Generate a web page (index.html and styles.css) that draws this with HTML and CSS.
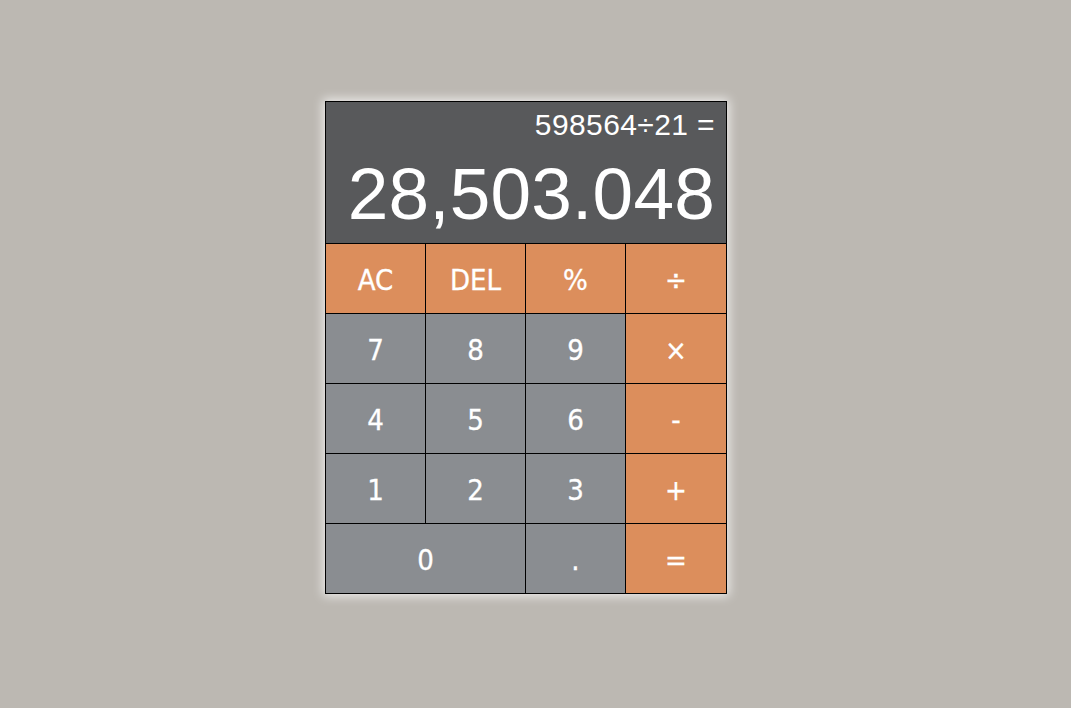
FILE: index.html
```html
<!DOCTYPE html>
<html lang="en">
<head>
<meta charset="utf-8">
<title>Calculator</title>
<link rel="stylesheet" href="styles.css">
</head>
<body>
<main class="stage">
  <div class="calc">
    <div class="display">
      <div class="expr">598564÷21 =</div>
      <div class="result">28,503.048</div>
    </div>
    <button class="key op">AC</button>
    <button class="key op">DEL</button>
    <button class="key op">%</button>
    <button class="key op">÷</button>
    <button class="key">7</button>
    <button class="key">8</button>
    <button class="key">9</button>
    <button class="key op">×</button>
    <button class="key">4</button>
    <button class="key">5</button>
    <button class="key">6</button>
    <button class="key op">-</button>
    <button class="key">1</button>
    <button class="key">2</button>
    <button class="key">3</button>
    <button class="key op">+</button>
    <button class="key wide">0</button>
    <button class="key">.</button>
    <button class="key op">=</button>
  </div>
</main>
</body>
</html>
```
FILE: styles.css
```css
html, body {
  margin: 0;
  height: 100%;
}
body {
  background: #bcb8b2;
  font-family: "DejaVu Sans", Verdana, sans-serif;
}
.stage {
  box-sizing: border-box;
  height: 100%;
  padding: 0 19px 13px 0;
  display: flex;
  align-items: center;
  justify-content: center;
}
.calc {
  display: grid;
  grid-template-columns: 99px 99px 99px 100px;
  grid-template-rows: 141px repeat(5, 69px);
  gap: 1px;
  background: #000;
  border: 1px solid #000;
  box-shadow: 0 0 10px 2px rgba(255, 255, 255, 0.75);
}
.display {
  grid-column: 1 / -1;
  background: #58595b;
  color: #fff;
  display: flex;
  flex-direction: column;
  align-items: flex-end;
  padding: 0 11px 0 0;
  font-family: "Liberation Sans", Arial, sans-serif;
}
.expr {
  font-size: 30px;
  letter-spacing: 0.4px;
  line-height: 1;
  margin-top: 8px;
}
.result {
  font-size: 73px;
  letter-spacing: 0.2px;
  line-height: 1;
  margin-top: 17px;
}
.key {
  border: 0;
  margin: 0;
  padding: 2px 0 0;
  background: #8a8d91;
  color: #fff;
  font-family: "DejaVu Sans Condensed", "DejaVu Sans", Verdana, sans-serif;
  font-stretch: condensed;
  font-size: 29px;
  -webkit-text-stroke: 0.3px #fff;
  cursor: pointer;
}
.key.op {
  background: #dc8e5c;
}
.key.wide {
  grid-column: span 2;
}
```
